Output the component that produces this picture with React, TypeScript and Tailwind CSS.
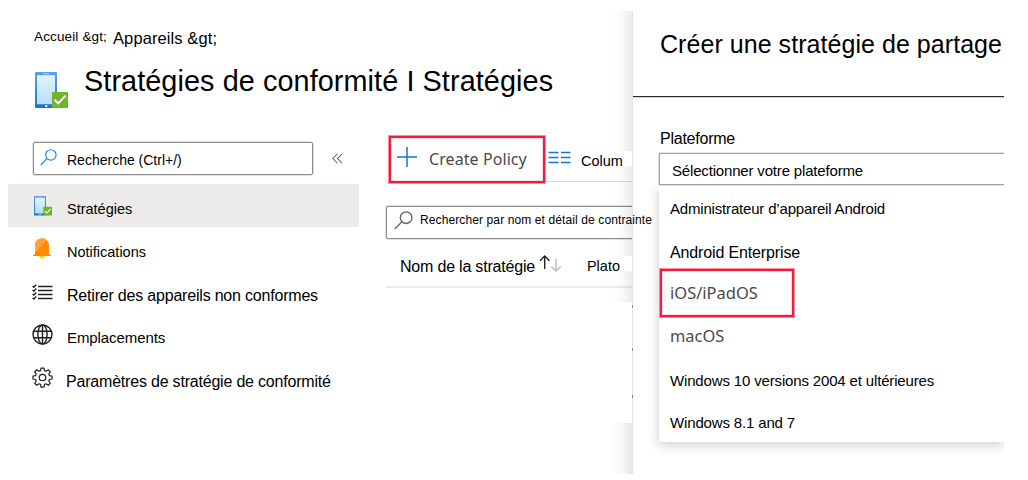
import type { ReactNode } from 'react';

function DeviceIcon({ className }: { className: string }) {
  return (
    <svg className={className} viewBox="0 0 33 37" preserveAspectRatio="none">
      <defs>
        <linearGradient id="frame" x1="0" y1="0" x2="0" y2="1">
          <stop offset="0" stopColor="#5ea0ef" />
          <stop offset="1" stopColor="#0f78d4" />
        </linearGradient>
        <linearGradient id="screen" x1="0" y1="0" x2="0" y2="1">
          <stop offset="0" stopColor="#e2f3fe" />
          <stop offset="1" stopColor="#b8def8" />
        </linearGradient>
      </defs>
      <rect x="0" y="0" width="22" height="36" rx="1" fill="url(#frame)" />
      <rect x="2" y="3.2" width="18" height="29" fill="url(#screen)" />
      <rect x="8" y="1.2" width="6" height="1" rx=".5" fill="#b9d8f8" />
      <rect x="10" y="33.3" width="2.4" height="1.6" fill="#fff" />
      <rect x="17" y="20" width="16" height="16" rx=".6" fill="#71b528" />
      <path d="M19.5 27.8l3.8 3.7 7.2-7.8" fill="none" stroke="#fff" strokeWidth="1.9" />
    </svg>
  );
}

function SearchIcon({ className }: { className: string }) {
  return (
    <svg className={className} viewBox="0 0 18 18" fill="none" stroke="currentColor" strokeWidth="1.3">
      <circle cx="11.5" cy="6.3" r="5.5" />
      <path d="M7.5 10.2L.8 17" />
    </svg>
  );
}

function BellIcon() {
  return (
    <svg className="block h-[21px] w-[18px]" viewBox="0 0 18 21">
      <path d="M6 17.5h6a3 3 0 0 1-6 0z" fill="#ffd400" />
      <path d="M2 16V7.5C2 3 5 .4 9 .4s7 2.6 7 7.1V16l2 1.2v.8H0v-.8z" fill="#ff8c00" />
      <path d="M2 15V7.5C2 3 5 .4 9 .4c2 0 3.6.6 4.8 1.7z" fill="#ffa338" />
    </svg>
  );
}

function ChecklistIcon() {
  return (
    <svg className="block h-4 w-[21px]" viewBox="0 0 21 16" fill="none" stroke="#222">
      <path d="M6 2.5h14.5M6 6.5h14.5M6 10.5h14.5M6 14.5h14.5" strokeWidth="1.4" />
      <path d="M.6 2.1l1.2 1.2L4.3.7M.6 6l1.2 1.2 2.5-2.6M.6 9.900l1.2 1.2 2.5-2.6M.6 13.800L1.800 15l2.500-2.600" strokeWidth="1.4" />
    </svg>
  );
}

function GlobeIcon() {
  return (
    <svg className="block h-[21px] w-[21px]" viewBox="0 0 21 21" fill="none" stroke="#1f1f1f" strokeWidth="1.4">
      <circle cx="10.5" cy="10.5" r="9.5" />
      <ellipse cx="10.5" cy="10.5" rx="4.6" ry="9.5" />
      <path d="M10.5 1v19M1.8 7.2h17.4M1.8 13.8h17.4" />
    </svg>
  );
}

function GearIcon() {
  return (
    <svg className="block h-[21px] w-[21px]" viewBox="0 0 24 24" fill="none" stroke="#222" strokeWidth="1.4" strokeLinejoin="round">
      <circle cx="12" cy="12" r="3.7" />
      <path d="M10.3 1.2h3.4l.6 3 1.7.7 2.6-1.7 2.3 2.3-1.7 2.6.7 1.7 3 .5v3.4l-3 .6-.7 1.7 1.7 2.6-2.3 2.3-2.6-1.7-1.7.7-.6 3h-3.4l-.5-3-1.700-.7-2.600 1.700-2.400-2.300 1.700-2.600-.7-1.700-3-.6v-3.400l3-.5.7-1.700-1.700-2.600 2.400-2.300 2.600 1.700 1.700-.7z" />
    </svg>
  );
}

function NavItem({ icon, iconTop, text, children }: { icon: ReactNode; iconTop: string; text: string; children: ReactNode }) {
  return (
    <li className="flex h-[43px] items-start pl-[24px]">
      <span className={`w-[35px] shrink-0 ${iconTop}`}>{icon}</span>
      <span className={`leading-5 ${text}`}>{children}</span>
    </li>
  );
}

function Sidebar() {
  return (
    <nav className="w-[351px] shrink-0 pt-[142px]">
      <div className="flex h-[42px] items-start pl-[25px]">
        <div className="flex h-[33px] w-[280px] items-start rounded-[2px] border border-[#8c8c8c] pl-[6px] pt-[6px] shadow-[0_0_0_0.5px_#c4c4c4]">
          <SearchIcon className="h-[17px] w-[17px] shrink-0 text-[#2b88d8]" />
          <span className="ml-[10px] mt-px text-[14px] leading-5">Recherche (Ctrl+/)</span>
        </div>
        <svg className="ml-[19px] mt-[11px] h-[11px] w-[11px]" viewBox="0 0 12 12" fill="none" stroke="#555" strokeWidth="1.1">
          <path d="M6 .8L1 6l5 5.2M11 .8L6 6l5 5.2" />
        </svg>
      </div>
      <ul>
        <li className="flex h-[43px] items-start bg-[#edebe9] pl-[26px]">
          <span className="w-[33px] shrink-0 pt-[12px]"><DeviceIcon className="block h-5 w-[18px]" /></span>
          <span className="pt-[15px] text-[14.5px] leading-5">Stratégies</span>
        </li>
        <NavItem icon={<span className="ml-px block"><BellIcon /></span>} iconTop="pt-[11px]" text="pt-[15px] text-[14.5px]">Notifications</NavItem>
        <NavItem icon={<ChecklistIcon />} iconTop="pt-[14px]" text="pt-[16px] text-[16px] tracking-[-.2px]">Retirer des appareils non conformes</NavItem>
        <NavItem icon={<GlobeIcon />} iconTop="pt-[11px]" text="pt-[15px] text-[15px] tracking-[-.08px]">Emplacements</NavItem>
        <NavItem icon={<GearIcon />} iconTop="pt-[11px]" text="pt-[16px] -ml-px text-[16px] tracking-[-.2px]">Paramètres de stratégie de conformité</NavItem>
      </ul>
    </nav>
  );
}

function PolicyList() {
  return (
    <main className="ml-[27px] w-[246px] shrink-0 pt-[136px]">
      <div className="flex h-[46px] items-start border-b border-[#d9d9d9] pl-[3px]">
        <button className="relative z-10 -mb-[2px] flex h-[47px] w-[156px] shrink-0 items-start border-2 border-[#f01c3c] pl-[6px] pt-[9px] text-left shadow-[0_0_0_1px_#f8909f,inset_0_0_0_0.5px_#f9b4be]">
          <svg className="h-5 w-5 shrink-0" viewBox="0 0 20 20" stroke="#1078d4" strokeWidth="1.5">
            <path d="M10 0v20M0 10h20" />
          </svg>
          <span className="ml-[12px] mt-[2px] font-['Noto_Sans',sans-serif] text-[16px] leading-5 tracking-[.08px] text-[#4a4a4a]">Create Policy</span>
        </button>
        <svg className="ml-[3px] mt-[15px] h-[14px] w-[23px] shrink-0" viewBox="0 0 23 14" stroke="#1078d4" strokeWidth="1.4">
          <path d="M.5 1.500h10M13 1.500h9.500M.5 6.500h10M13 6.500h9.500M.5 11.500h10M13 11.500h9.500" />
        </svg>
        <span className="relative z-10 ml-[10px] mt-[15px] h-[15px] w-[52px] shrink-0 bg-white text-[14.5px] leading-5">Colum</span>
      </div>
      <div className="mt-[24px] flex h-[33px] items-start rounded-l-[2px] border border-r-0 border-[#8c8c8c] pl-[7px] pt-[4px] shadow-[0_0_0_0.5px_#c4c4c4]">
        <SearchIcon className="h-[19px] w-[19px] shrink-0 text-[#666]" />
        <span className="relative z-30 ml-[7px] -mt-px whitespace-nowrap text-[12px] leading-5 tracking-[.11px]">Rechercher par nom et détail de contrainte</span>
      </div>
      <div className="flex h-[49px] items-start border-b-2 border-[#ebebeb] pl-[14px] pt-[17px] leading-5">
        <span className="shrink-0 pt-px text-[16px] tracking-[-.2px]">Nom de la stratégie</span>
        <svg className="ml-[4px] -mt-px h-[17px] w-[23px] shrink-0" viewBox="0 0 23 17" fill="none" strokeWidth="1.4">
          <path d="M5.7 14V1M1 5.700L5.700 1l4.700 4.700" stroke="#222" />
          <path d="M17 4v12M12.300 11.500L17 16l4.700-4.500" stroke="#bbb" />
        </svg>
        <span className="relative z-10 ml-[25px] h-[15px] w-[45px] shrink-0 bg-white text-[14.5px]">Plato</span>
      </div>
    </main>
  );
}

function CreatePanel() {
  return (
    <aside className="relative z-20 mt-[11px] h-[463px] w-[372px] shrink-0 border-l border-[#e6e6e6] bg-white">
      <h2 className="h-[86px] border-b border-[#2a2a2a] pl-[27px] pt-[18px] text-[25px] leading-[30px] tracking-[.05px] shadow-[0_0.5px_0_#aaa]">Créer une stratégie de partage</h2>
      <div className="pl-[26px] pt-[32px]">
        <label className="block h-[24px] pl-px text-[16px] leading-5 tracking-[-.24px]">Plateforme</label>
        <div className="relative z-10 h-[32px] border border-r-0 border-[#a0a0a0] pl-[12px] pt-[7px] text-[15px] leading-5 tracking-[-.17px] shadow-[0_0_0_0.5px_#c8c8c8] [clip-path:inset(-1px_0_-1px_-1px)]">Sélectionner votre plateforme</div>
        <div className="-ml-5 box-content h-[278px] w-[345px] overflow-hidden pl-5">
          <ul className="h-[257px] rounded-bl-[2px] bg-white shadow-[0_3px_12px_rgba(0,0,0,0.2)]">
            <li className="h-[43px] pl-[11px] pt-[14px] text-[15px] leading-5 tracking-[-.18px]">Administrateur d’appareil Android</li>
            <li className="h-[41px] pl-[11px] pt-[15px] text-[16px] leading-5 tracking-[-.14px]">Android Enterprise</li>
            <li className="ml-px h-[48px] w-[134px] border-2 border-[#f01c3c] pl-2 pt-[12px] font-['Noto_Sans',sans-serif] text-[16.5px] leading-5 text-[#4a4a4a] shadow-[0_0_0_1px_#f8909f,inset_0_0_0_0.5px_#f9b4be]">iOS/iPadOS</li>
            <li className="h-[42px] pl-[11px] pt-[9px] font-['Noto_Sans',sans-serif] text-[16.4px] leading-5 text-[#4a4a4a]">macOS</li>
            <li className="h-[42px] pl-[11px] pt-[12px] text-[15px] leading-5 tracking-[-.155px]">Windows 10 versions 2004 et ultérieures</li>
            <li className="h-[41px] pl-[11px] pt-[12px] text-[15px] leading-5 tracking-[-.15px]">Windows 8.1 and 7</li>
          </ul>
        </div>
      </div>
      <i className="absolute -left-px top-[294px] h-[3px] w-px bg-[#888]" />
      <i className="absolute -left-px top-[337px] h-[3px] w-px bg-[#888]" />
      <i className="absolute -left-px top-[384px] h-[3px] w-px bg-[#888]" />
    </aside>
  );
}

export default function App() {
  return (
    <div className="relative flex h-[480px] w-[1028px] overflow-hidden bg-white pl-2 font-['Liberation_Sans',Arial,sans-serif] text-black">
      <header className="absolute left-[34px] top-[27px] w-[560px]">
        <div className="flex items-start leading-5">
          <span className="w-[79px] text-[13.5px] tracking-[.14px]">Accueil &amp;gt;</span>
          <span className="pt-px text-[16.5px] tracking-[.1px]">Appareils &amp;gt;</span>
        </div>
        <div className="flex items-start pt-[17px]">
          <DeviceIcon className="ml-px mt-[7px] block h-[37px] w-[33px] shrink-0" />
          <h1 className="ml-[16px] whitespace-nowrap text-[28.8px] leading-8 tracking-[.09px]">Stratégies de conformité I Stratégies</h1>
        </div>
      </header>
      <Sidebar />
      <PolicyList />
      <div className="absolute left-[612px] top-[11px] h-[291px] w-5 bg-linear-to-r from-transparent via-black/2 to-black/8" />
      <div className="absolute left-[612px] top-[423px] h-[51px] w-5 bg-linear-to-r from-transparent via-black/3 to-black/10" />
      <CreatePanel />
    </div>
  );
}
